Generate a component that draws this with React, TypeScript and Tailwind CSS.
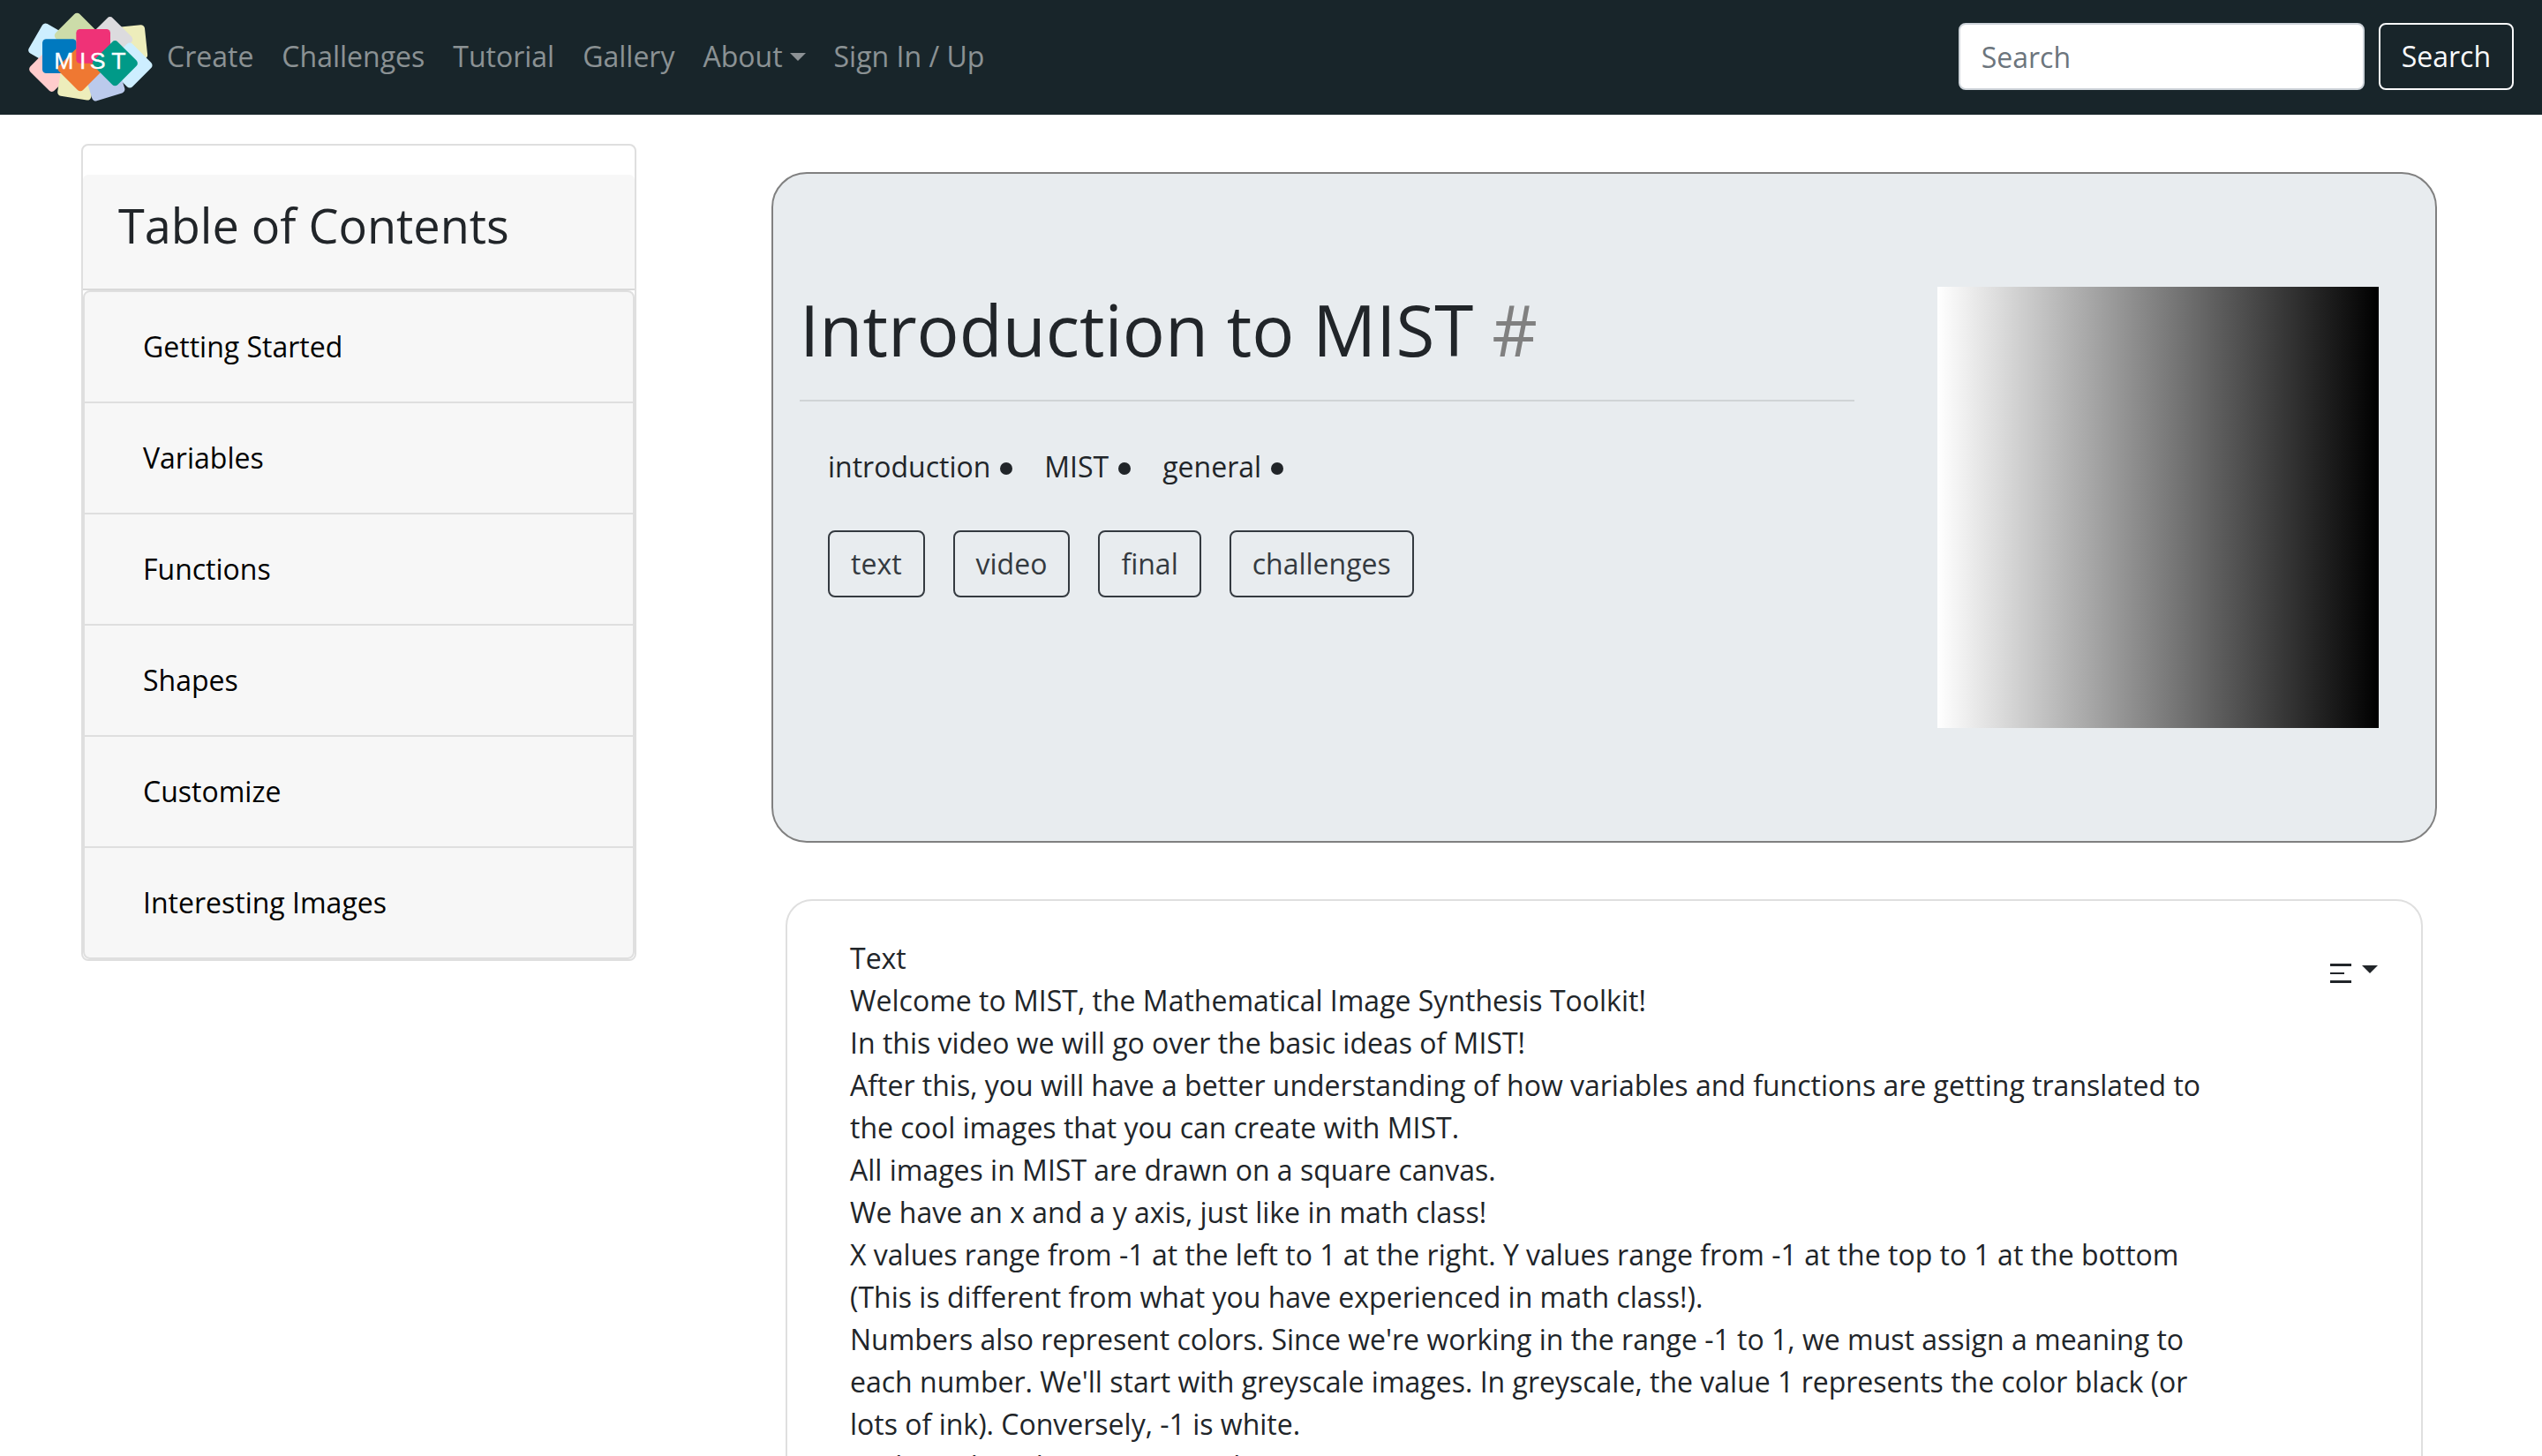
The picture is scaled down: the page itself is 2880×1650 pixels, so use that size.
import React from "react";

const navLinks = ["Create", "Challenges", "Tutorial", "Gallery"];

const chapters = [
  "Getting Started",
  "Variables",
  "Functions",
  "Shapes",
  "Customize",
  "Interesting Images",
];

const tags = ["introduction", "MIST", "general"];

const sections = ["text", "video", "final", "challenges"];

const paragraphs = [
  "Welcome to MIST, the Mathematical Image Synthesis Toolkit!",
  "In this video we will go over the basic ideas of MIST!",
  "After this, you will have a better understanding of how variables and functions are getting translated to the cool images that you can create with MIST.",
  "All images in MIST are drawn on a square canvas.",
  "We have an x and a y axis, just like in math class!",
  "X values range from -1 at the left to 1 at the right. Y values range from -1 at the top to 1 at the bottom (This is different from what you have experienced in math class!).",
  "Numbers also represent colors. Since we're working in the range -1 to 1, we must assign a meaning to each number. We'll start with greyscale images. In greyscale, the value 1 represents the color black (or lots of ink). Conversely, -1 is white.",
  "And numbers between -1 and 1 are grey.",
];

type Tile = { cx: number; cy: number; angle: number; fill: string };

const tiles: Tile[] = [
  { cx: 171, cy: 152, angle: 30, fill: "#cdeeff" },
  { cx: 439, cy: 145, angle: -6, fill: "#ededbb" },
  { cx: 374, cy: 132, angle: 45, fill: "#dcdbde" },
  { cx: 262, cy: 119, angle: 45, fill: "#ccdca9" },
  { cx: 176, cy: 233, angle: 45, fill: "#ffcccc" },
  { cx: 441, cy: 220, angle: 45, fill: "#cdeeff" },
  { cx: 260, cy: 274, angle: 9, fill: "#ededbb" },
  { cx: 355, cy: 272, angle: -17, fill: "#bbcaec" },
  { cx: 202, cy: 189, angle: 0, fill: "#0079bf" },
  { cx: 273, cy: 231, angle: 45, fill: "#ef7832" },
  { cx: 317, cy: 155, angle: 0, fill: "#ef3277" },
  { cx: 391, cy: 213, angle: 45, fill: "#009a88" },
];

function Logo() {
  return (
    <svg viewBox="96 40 423 303" className="h-[101px] w-[141px]" role="img" aria-label="MIST">
      {tiles.map((t, i) => (
        <rect
          key={i}
          x={t.cx - 58}
          y={t.cy - 58}
          width="116"
          height="116"
          rx="13"
          fill={t.fill}
          transform={`rotate(${t.angle} ${t.cx} ${t.cy})`}
        />
      ))}
      <text
        x="184 270 305 379"
        y="233"
        fontSize="80"
        fill="#fff"
        stroke="#fff"
        strokeWidth="1"
        fontFamily="'Liberation Sans', Arial, sans-serif"
      >
        MIST
      </text>
    </svg>
  );
}

function Caret() {
  return (
    <svg viewBox="0 0 18 9" className="h-[9px] w-[18px]" fill="currentColor" aria-hidden="true">
      <path d="M0 0h18L9 9z" />
    </svg>
  );
}

function NavBar() {
  return (
    <header className="flex h-[130px] items-center justify-between bg-[#18252a] px-8 pb-0.5">
      <div className="flex items-center">
        <a href="#home">
          <Logo />
        </a>
        <nav className="flex items-center text-white/50">
          {navLinks.map((label) => (
            <a key={label} href={`#${label.toLowerCase()}`} className="px-4">
              {label}
            </a>
          ))}
          <button type="button" className="flex items-center gap-2 px-4">
            About
            <Caret />
          </button>
          <a href="#signin" className="px-4">
            Sign In / Up
          </a>
        </nav>
      </div>
      <form className="flex gap-4" onSubmit={(e) => e.preventDefault()}>
        <input
          type="search"
          aria-label="Search"
          placeholder="Search"
          className="h-[76px] w-[460px] rounded-lg border-2 border-[#ced4da] bg-white px-6 text-[#495057] placeholder:text-[#6c757d]"
        />
        <button
          type="submit"
          className="h-[76px] rounded-lg border-2 border-[#f8f9fa] px-6 text-[#f8f9fa]"
        >
          Search
        </button>
      </form>
    </header>
  );
}

function Sidebar() {
  return (
    <aside className="self-start rounded-lg border-2 border-[#dfdfdf] bg-white pt-[33px]">
      <div className="rounded-t-md border-b-2 border-[#d9d9d9] bg-[#f7f7f7] px-10 pt-6 pb-[38px]">
        <h3 className="text-[54px] leading-[67px]">Table of Contents</h3>
      </div>
      <ul className="divide-y-2 divide-[#dfdfdf] overflow-hidden rounded-lg border-2 border-[#dfdfdf] bg-[#f7f7f7] text-black">
        {chapters.map((title) => (
          <li key={title} className="px-10 py-6">
            <button type="button" className="h-[76px] px-[26px] text-left">
              {title}
            </button>
          </li>
        ))}
      </ul>
    </aside>
  );
}

function Intro() {
  return (
    <section className="flex items-start gap-[94px] rounded-[40px] border-2 border-[#808080] bg-[#e8ecef] py-32 pr-16 pl-[30px]">
      <div className="flex-1">
        <h1 className="text-[80px] leading-[96px]">
          Introduction to MIST{" "}
          <a href="#introduction" className="text-[#808080]">
            #
          </a>
        </h1>
        <hr className="mt-8 border-t-2 border-black/10" />
        <ul className="mt-[50px] flex gap-9 px-8">
          {tags.map((tag) => (
            <li key={tag} className="flex items-center gap-[11px]">
              {tag}
              <span className="mt-1 size-[14px] rounded-full bg-[#212529]" />
            </li>
          ))}
        </ul>
        <div className="mt-12 flex gap-8 px-8">
          {sections.map((name) => (
            <button
              key={name}
              type="button"
              className="h-[76px] rounded-lg border-2 border-[#343a40] px-6 text-[#343a40]"
            >
              {name}
            </button>
          ))}
        </div>
      </div>
      <div
        role="img"
        aria-label="Greyscale from white to black"
        className="size-[500px] bg-[linear-gradient(to_right,#fff,#000)]"
      />
    </section>
  );
}

function TextCard() {
  return (
    <section className="mx-4 mt-16 flex items-start justify-between rounded-[30px] border-2 border-[#dfdfdf] bg-white py-[41px] pr-[49px] pl-[71px]">
      <div className="mr-[120px] flex-1">
        <h2>Text</h2>
        {paragraphs.map((text) => (
          <p key={text}>{text}</p>
        ))}
      </div>
      <button type="button" aria-label="Sections" className="mt-[30px] flex items-start gap-3">
        <svg viewBox="0 0 24 22" className="h-[22px] w-6" fill="currentColor" aria-hidden="true">
          <path d="M0 0h24v3H0zM0 10h16v2H0zM0 19h24v3H0z" />
        </svg>
        <span className="pt-0.5">
          <Caret />
        </span>
      </button>
    </section>
  );
}

export default function App() {
  return (
    <div className="min-h-screen bg-white font-['Open_Sans',sans-serif] text-[32px] leading-[48px] text-[#212529]">
      <NavBar />
      <div className="grid grid-cols-[1fr_3fr] gap-x-[153px] pt-[33px] pr-[119px] pl-[92px]">
        <Sidebar />
        <main className="pt-8">
          <Intro />
          <TextCard />
        </main>
      </div>
    </div>
  );
}
